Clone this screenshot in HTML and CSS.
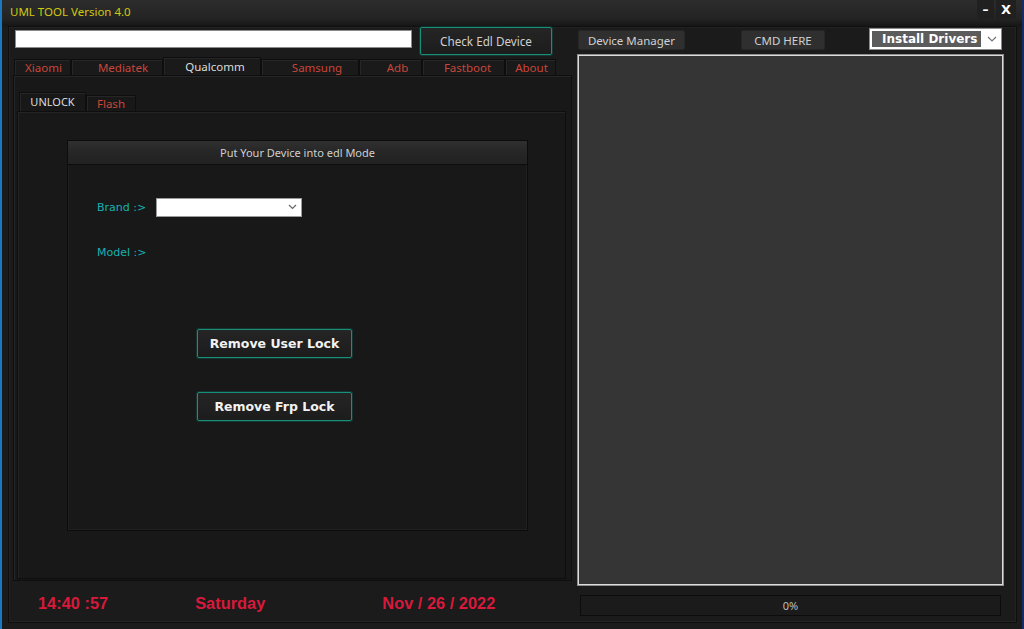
FILE: index.html
```html
<!DOCTYPE html>
<html>
<head>
<meta charset="utf-8">
<title>UML TOOL Version 4.0</title>
<link rel="stylesheet" href="styles.css">
</head>
<body>
<div class="window">
  <div class="titlebar">
    <span class="title">UML TOOL Version 4.0</span>
    <div class="winctl">
      <span class="ctl min">–</span>
      <span class="ctl close">X</span>
    </div>
  </div>
  <div class="main">
    <div class="left">
      <div class="toprow">
        <div class="path"></div>
        <div class="btn-teal check">Check Edl Device</div>
      </div>
      <div class="tabs">
        <div class="tab w-xiaomi">Xiaomi</div>
        <div class="tab w-mediatek">Mediatek</div>
        <div class="tab active w-qualcomm">Qualcomm</div>
        <div class="tab w-samsung">Samsung</div>
        <div class="tab w-adb">Adb</div>
        <div class="tab w-fastboot">Fastboot</div>
        <div class="tab w-about">About</div>
      </div>
      <div class="tabpanel">
        <div class="subtabs">
          <div class="subtab active">UNLOCK</div>
          <div class="subtab">Flash</div>
        </div>
        <div class="subpanel">
          <div class="group">
            <div class="group-head">Put Your Device into edl Mode</div>
            <div class="group-body">
              <div class="field brand">
                <span class="label">Brand :&gt;</span>
                <div class="select">
                  <svg class="chev" width="9" height="6" viewBox="0 0 9 6"><path d="M1 1 L4.5 4.5 L8 1" fill="none" stroke="#666" stroke-width="1.2"/></svg>
                </div>
              </div>
              <div class="field model">
                <span class="label">Model :&gt;</span>
              </div>
              <div class="actions">
                <div class="btn-teal big">Remove User Lock</div>
                <div class="btn-teal big">Remove Frp Lock</div>
              </div>
            </div>
          </div>
        </div>
      </div>
      <div class="footer">
        <span class="clock time">14:40 :57</span>
        <span class="clock day">Saturday</span>
        <span class="clock date">Nov / 26 / 2022</span>
      </div>
    </div>
    <div class="right">
      <div class="toolbar">
        <div class="btn-flat devmgr">Device Manager</div>
        <div class="btn-flat cmd">CMD HERE</div>
        <div class="combo">
          <span class="combo-text">Install Drivers</span>
          <svg class="combo-chev" width="10" height="6" viewBox="0 0 10 6"><path d="M1 1 L5 5 L9 1" fill="none" stroke="#777" stroke-width="1.2"/></svg>
        </div>
      </div>
      <div class="log"></div>
      <div class="progress">0%</div>
    </div>
  </div>
</div>
</body>
</html>
```

FILE: styles.css
```css
* { box-sizing: border-box; }
html, body { margin: 0; padding: 0; background: #1b1b1b; }
body { width: 1024px; height: 629px; overflow: hidden; font-family: "Noto Sans", "DejaVu Sans", sans-serif; font-size: 12px; }

.window {
  width: 1024px; height: 629px;
  background: #1b1b1b;
  border-left: 2px solid #1b78c2;
  border-right: 2px solid #162c62;
  display: flex; flex-direction: column;
}

.titlebar {
  height: 26px; flex: none;
  background: linear-gradient(#2c2c2c, #242424 70%, #161616);
  display: flex; align-items: flex-start; justify-content: space-between;
}
.title { color: #cfc812; font-size: 11.5px; padding: 4px 0 0 8px; line-height: 16px; }
.winctl { display: flex; gap: 2px; padding-right: 6px; }
.ctl { display: flex; align-items: center; justify-content: center; height: 19px; background: #202020; color: #fff; font-weight: bold; font-family: "DejaVu Sans", sans-serif; }
.min { width: 17px; font-size: 12px; }
.close { width: 20px; font-size: 13px; }

.main {
  flex: 1;
  margin: 0 5px 6px 6px;
  border: 1px solid #0f0f0f;
  box-shadow: inset 0 0 0 1px #222;
  display: flex;
}

.left { width: 566px; padding-left: 4px; display: flex; flex-direction: column; }

.toprow { display: flex; align-items: flex-start; height: 30px; padding-left: 2px; }
.path { width: 397px; height: 18px; margin-top: 3px; background: #fff; border: 1px solid #8a8a8a; }
.btn-teal {
  background: linear-gradient(#252525, #1c1c1c);
  border: 1px solid #17907a;
  box-shadow: 0 0 0 1px rgba(20, 110, 95, 0.35);
  border-radius: 2px;
  color: #cfcfcf;
  display: flex; align-items: center; justify-content: center;
}
.check { width: 132px; height: 28px; margin-left: 8px; font-size: 11.7px; }

.tabs { display: flex; height: 18px; padding-left: 1px; position: relative; z-index: 1; }
.tab {
  margin-top: 2px; height: 16px;
  border: 1px solid #0e0e0e; border-bottom: none;
  box-shadow: inset 1px 1px 0 #262626;
  background: #1a1a1a;
  color: #c9463a; font-size: 11.5px; line-height: 15px;
  display: flex; justify-content: center; padding-left: 2px;
}
.tab.active { margin-top: 0; height: 18px; background: #1a1a1a; color: #dcdcdc; line-height: 17px; }
.w-xiaomi { width: 57px; }
.w-mediatek { width: 92px; padding-left: 12px; }
.w-qualcomm { width: 98px; padding-left: 6px; }
.w-samsung { width: 98px; padding-left: 14px; }
.w-adb { width: 63px; padding-left: 14px; }
.w-fastboot { width: 83px; padding-left: 8px; }
.w-about { width: 51px; }

.tabpanel {
  width: 559px; height: 506px;
  border: 1px solid #0e0e0e;
  box-shadow: inset 1px 1px 0 #262626;
  background: #181818;
  display: flex; flex-direction: column;
}
.subtabs { display: flex; padding: 16px 0 0 5px; height: 35px; position: relative; z-index: 1; }
.subtab {
  margin-top: 3px; height: 16px; width: 50px;
  border: 1px solid #0e0e0e; border-bottom: none;
  box-shadow: inset 1px 1px 0 #262626;
  color: #c9463a; font-size: 11.5px; line-height: 15px;
  display: flex; justify-content: center;
}
.subtab.active { margin-top: 0; height: 19px; width: 67px; color: #dcdcdc; font-size: 11px; line-height: 18px; background: #181818; }

.subpanel {
  margin-left: 3px; width: 549px; flex: 1; margin-bottom: 1px;
  border: 1px solid #0e0e0e;
  box-shadow: inset 1px 1px 0 #242424;
  padding: 28px 0 0 49px;
}

.group {
  width: 461px; height: 391px;
  border: 1px solid #0c0c0c;
  box-shadow: inset 0 0 0 1px #202020;
  display: flex; flex-direction: column;
}
.group-head {
  height: 24px; flex: none;
  background: linear-gradient(#303030, #262626 50%, #222);
  border-bottom: 1px solid #0c0c0c;
  color: #cfcfcf; font-size: 11px; line-height: 23px; text-align: center;
}
.group-body { flex: 1; padding-left: 29px; display: flex; flex-direction: column; }

.field { display: flex; align-items: center; }
.label { color: #16b1b4; font-size: 11px; width: 59px; font-family: "DejaVu Sans", sans-serif; }
.brand { margin-top: 32px; height: 20px; }
.select {
  width: 146px; height: 19px; background: #fff; border: 1px solid #9a9a9a;
  display: flex; align-items: center; justify-content: flex-end; padding-right: 4px;
}
.model { margin-top: 25px; height: 20px; }

.actions { display: flex; flex-direction: column; gap: 34px; margin-top: 67px; padding-left: 100px; }
.big { width: 155px; height: 29px; color: #f2f2f2; font-weight: bold; font-size: 12.5px; font-family: "DejaVu Sans", sans-serif; }

.footer { height: 40px; display: flex; align-items: center; padding-top: 4px; }
.clock { color: #d71a3b; font-family: "Liberation Sans", sans-serif; font-weight: bold; font-size: 16.4px; }
.time { margin-left: 25px; }
.day { margin-left: 87px; }
.date { margin-left: 117px; }

.right { width: 427px; margin-left: 2px; display: flex; flex-direction: column; }
.toolbar { height: 27px; display: flex; align-items: flex-start; }
.btn-flat {
  background: #2f2f2f; border: 1px solid #262626; border-radius: 2px;
  color: #cfcfcf; font-size: 11.5px; height: 20px; margin-top: 3px;
  display: flex; align-items: center; justify-content: center;
}
.devmgr { width: 107px; margin-left: 1px; }
.cmd { width: 84px; margin-left: 56px; }
.combo {
  margin-left: 44px; margin-top: 1px;
  width: 133px; height: 22px;
  background: #fff; border: 1px solid #8a8a8a;
  display: flex; align-items: center; padding: 2px;
}
.combo-text {
  background: #5c5c5c; color: #fff; font-weight: bold; font-family: "DejaVu Sans", sans-serif;
  font-size: 12px; height: 16px; line-height: 16px; width: 109px; padding-left: 10px;
  white-space: nowrap;
}
.combo-chev { margin-left: 6px; }

.log {
  width: 427px; height: 532px;
  background: #353535;
  border: 1px solid #8e8e8e;
  box-shadow: inset 0 0 0 1px #dcdcdc;
}
.progress {
  margin: 9px 0 0 3px; width: 421px; height: 21px;
  background: #1b1b1b; border: 1px solid #0c0c0c;
  color: #bdbdbd; font-size: 11px; text-align: center; line-height: 19px;
}
```
